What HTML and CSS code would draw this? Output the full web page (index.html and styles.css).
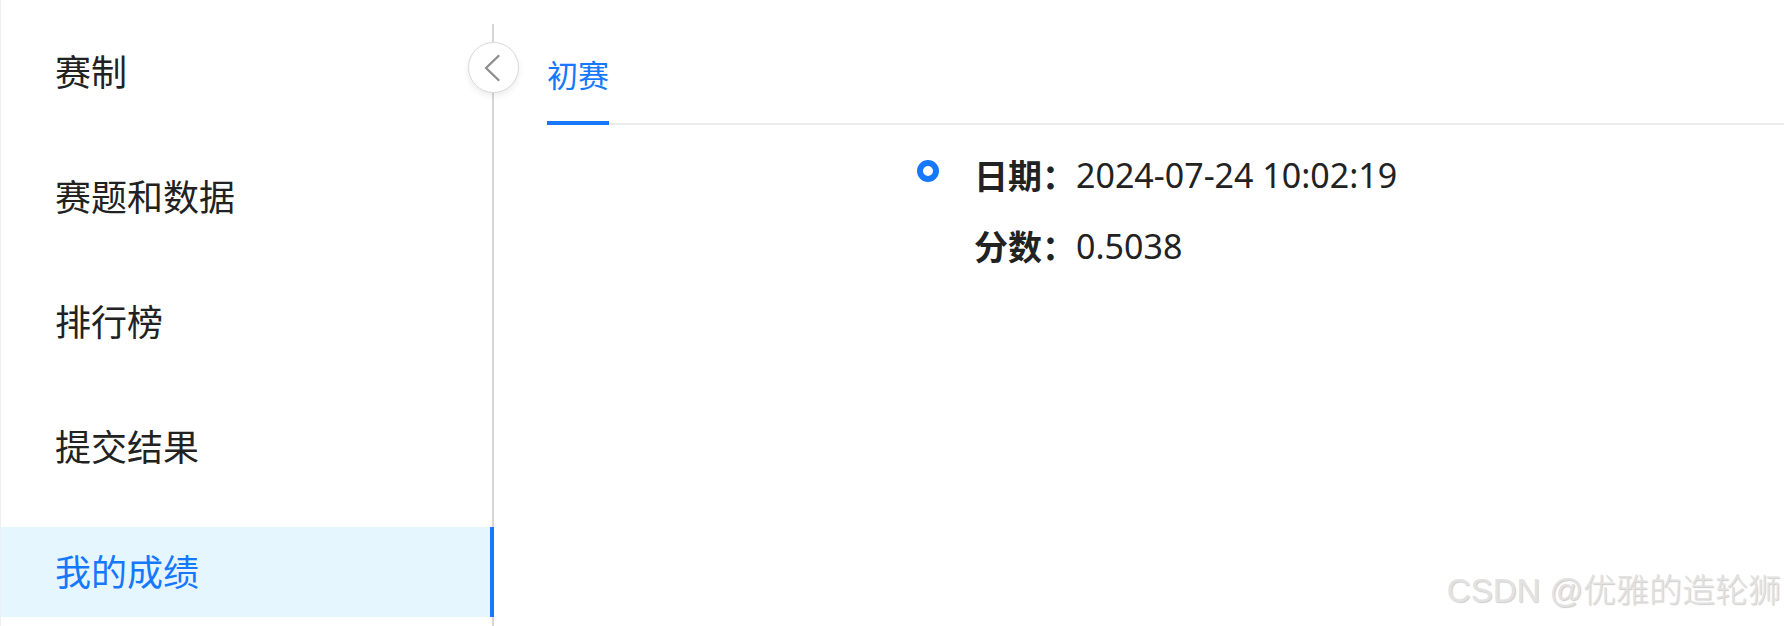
FILE: index.html
```html
<!DOCTYPE html>
<html lang="zh-CN">
<head>
<meta charset="utf-8">
<title>我的成绩</title>
<link rel="stylesheet" href="styles.css">
</head>
<body>
<div class="page">
  <aside class="sidebar">
    <nav class="menu">
      <div class="menu-item">赛制</div>
      <div class="menu-item">赛题和数据</div>
      <div class="menu-item">排行榜</div>
      <div class="menu-item">提交结果</div>
      <div class="menu-item active">我的成绩</div>
    </nav>
    <button class="collapse" aria-label="收起">
      <svg width="18" height="28" viewBox="0 0 18 28"><path d="M15.5 2 L3 14 L15.5 26" fill="none" stroke="#8f8f8f" stroke-width="2.4" stroke-linecap="round" stroke-linejoin="round"/></svg>
    </button>
  </aside>
  <main class="main">
    <div class="tabs">
      <div class="tab active">初赛</div>
    </div>
    <ul class="timeline">
      <li class="tl-item">
        <span class="tl-dot"></span>
        <div class="tl-content">
          <div class="row"><span class="label">日期：</span><span class="value">2024-07-24 10:02:19</span></div>
          <div class="row"><span class="label">分数：</span><span class="value">0.5038</span></div>
        </div>
      </li>
    </ul>
  </main>
  <div class="watermark">CSDN @优雅的造轮狮</div>
</div>
</body>
</html>
```
FILE: styles.css
```css
html, body {
  margin: 0;
  padding: 0;
  background: #fff;
}
body {
  font-family: "Noto Sans", "Noto Sans CJK SC", sans-serif;
  color: #222;
  overflow: hidden;
}
.page {
  position: relative;
  display: flex;
  height: 626px;
  border-left: 1px solid #eeeff3;
}
.sidebar {
  position: relative;
  width: 491px;
  margin-top: 24px;
  border-right: 2px solid #d6d6d6;
  flex-shrink: 0;
}
.menu {
  display: flex;
  flex-direction: column;
  gap: 35px;
  padding-top: 3px;
}
.menu-item {
  height: 90px;
  display: flex;
  align-items: center;
  padding-left: 54px;
  padding-bottom: 5px;
  margin-right: -2px;
  font-family: "Noto Sans CJK SC", sans-serif;
  font-size: 36px;
  color: #222;
  box-sizing: border-box;
}
.menu-item.active {
  background: #e6f6ff;
  color: #1677ff;
  border-right: 4px solid #1677ff;
}
.collapse {
  position: absolute;
  top: 18px;
  right: -27px;
  width: 51px;
  height: 51px;
  border-radius: 50%;
  border: 1px solid #d9d9d9;
  background: #fff;
  box-shadow: 0 3px 6px rgba(0, 0, 0, 0.08);
  padding: 0;
  display: flex;
  align-items: center;
  justify-content: center;
  box-sizing: border-box;
}
.collapse svg {
  margin-left: -3px;
}
.main {
  flex: 1;
  padding-left: 53px;
}
.tabs {
  display: flex;
  border-bottom: 2px solid #ebebeb;
  height: 123px;
}
.tab {
  font-family: "Noto Sans CJK SC", sans-serif;
  font-size: 31px;
  line-height: 40px;
  padding: 54px 0 27px;
  margin-bottom: -2px;
  border-bottom: 4px solid transparent;
}
.tab.active {
  color: #1677ff;
  border-bottom-color: #1677ff;
}
.timeline {
  list-style: none;
  margin: 28px 0 0;
  padding: 0 0 0 370px;
}
.tl-item {
  display: flex;
  align-items: flex-start;
  gap: 35px;
}
.tl-dot {
  width: 22px;
  height: 22px;
  margin-top: 7px;
  border-radius: 50%;
  border: 6px solid #1677ff;
  background: #fff;
  box-sizing: border-box;
  flex-shrink: 0;
}
.tl-content {
  display: flex;
  flex-direction: column;
  gap: 27px;
}
.row {
  font-size: 34px;
  line-height: 44px;
  display: flex;
}
.label {
  font-family: "Noto Sans CJK SC", sans-serif;
  font-weight: 700;
  color: #222;
}
.value {
  color: #222;
}
.watermark {
  position: absolute;
  right: 3px;
  bottom: 14px;
  font-family: "Liberation Sans", "Noto Sans CJK SC", sans-serif;
  font-size: 33px;
  font-weight: 300;
  color: #e2e2e2;
  text-shadow: 1px 1px 1px rgba(0, 0, 0, 0.2);
  white-space: nowrap;
}
```
